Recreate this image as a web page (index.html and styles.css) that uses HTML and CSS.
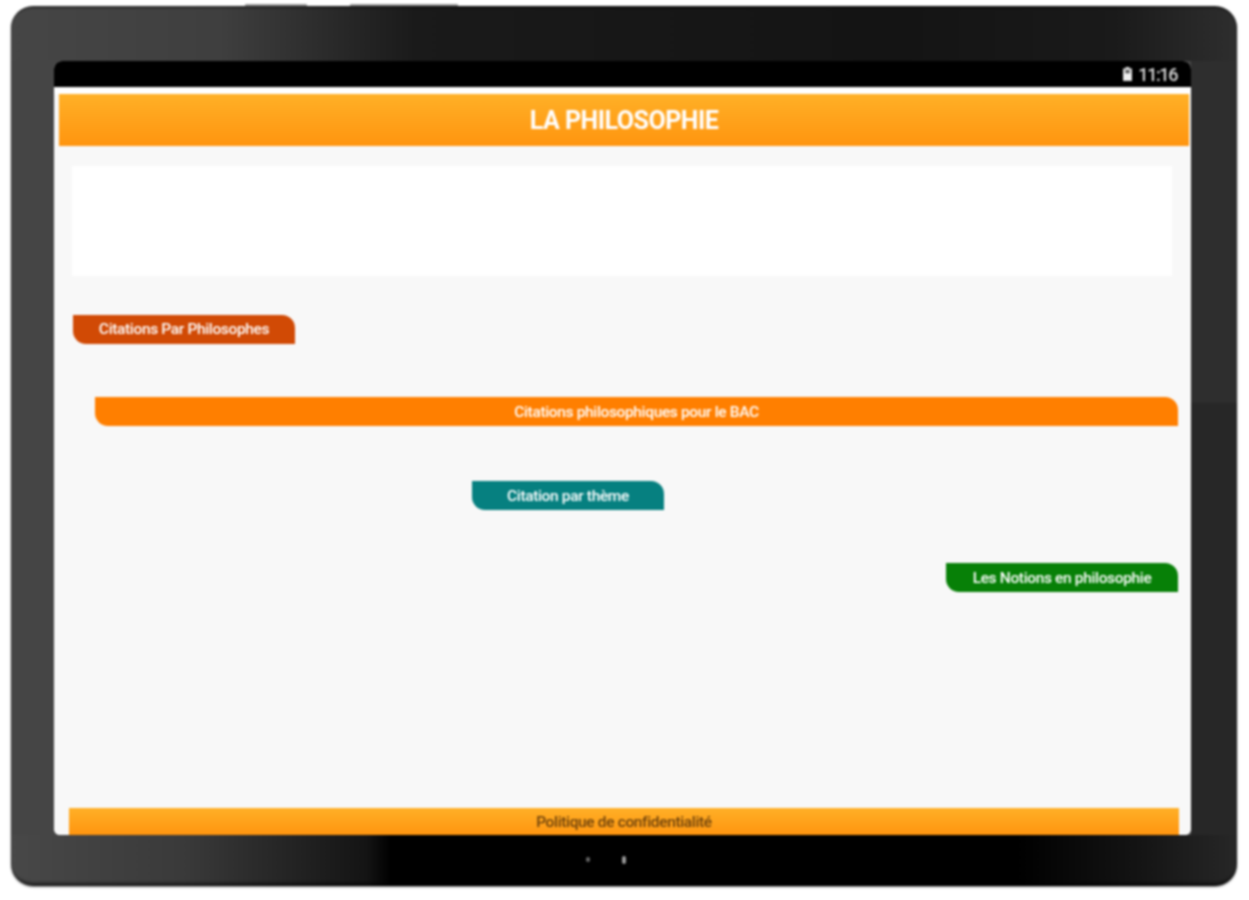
FILE: index.html
```html
<!DOCTYPE html>
<html lang="fr">
<head>
<meta charset="utf-8">
<title>La Philosophie</title>
<link rel="stylesheet" href="styles.css">
</head>
<body>
<div class="device">
  <span class="hw-key hw-key-a"></span>
  <span class="hw-key hw-key-b"></span>
  <div class="screen">
    <div class="status">
      <svg class="battery" width="9" height="14" viewBox="0 0 9 14" aria-hidden="true"><path d="M2.500 0h4v1.500H9V14H0V1.500h2.500z" fill="#dcdcdc"/><path d="M2.500 3h4v3.500h-4z" fill="#555"/><path d="M1 6.500h7V13H1z" fill="#efefef"/></svg>
      <span class="clock">11:16</span>
    </div>
    <div class="app">
      <header class="appbar"><h1>LA PHILOSOPHIE</h1></header>
      <div class="ad"></div>
      <a class="pill pill-red">Citations Par Philosophes</a>
      <a class="pill pill-orange">Citations philosophiques pour le BAC</a>
      <a class="pill pill-teal">Citation par thème</a>
      <a class="pill pill-green">Les Notions en philosophie</a>
      <footer class="policy">Politique de confidentialité</footer>
    </div>
  </div>
  <div class="nav">
    <span class="nav-dot"></span>
    <span class="nav-dot nav-dot-big"></span>
  </div>
</div>
</body>
</html>
```
FILE: styles.css
```css
* { box-sizing: border-box; }
html, body { margin: 0; height: 100%; background: #fff; }
body { padding: 6px 12px 14px 11px; font-family: Roboto, "Liberation Sans", sans-serif; }

.device {
  position: relative;
  height: 880px;
  padding: 55px 46px 0 43px;
  display: flex;
  flex-direction: column;
  border-radius: 22px;
  filter: blur(.8px);
  box-shadow: 0 1px 2px rgba(0,0,0,.5), inset 0 -6px 3px -3px rgba(0,0,0,.55), inset 0 3px 2px -1px rgba(0,0,0,.35);
  background:
    linear-gradient(90deg, #464646 0, #3f3f3f 17%, #1a1a1a 33%, #141414 72%, #1a1a1a 90%, #2e2e2e 100%) top/100% 55px no-repeat,
    linear-gradient(90deg, #484848 0, #3a3a3a 14%, #141414 29%, #000 31%, #000 82%, #141414 92%, #272727 100%) bottom/100% 51px no-repeat,
    linear-gradient(180deg, #2e2e2e 0, #2e2e2e 45%, #272727 45.200%, #272727 100%) right/46px 100% no-repeat,
    #454545;
}
.hw-key { position: absolute; top: -2px; height: 2px; background: #999; border-radius: 1px 1px 0 0; }
.hw-key-a { left: 234px; width: 62px; }
.hw-key-b { left: 339px; width: 108px; }

.screen {
  height: 774px;
  display: flex;
  flex-direction: column;
  border-radius: 8px 8px 6px 6px;
  overflow: hidden;
  background: #f8f8f8;
}
.status {
  height: 26px;
  flex: none;
  background: #000;
  display: flex;
  align-items: center;
  justify-content: flex-end;
  gap: 6px;
  padding-right: 14px;
}
.clock { color: #d8d8d8; font-size: 18px; font-weight: 500; letter-spacing: -1.400px; }

.app {
  flex: 1;
  display: flex;
  flex-direction: column;
  background: #f8f8f8;
  border-top: 7px solid #fff;
}
.appbar {
  flex: none;
  height: 52px;
  margin: 0 2px 0 5px;
  background: linear-gradient(180deg, #ffb027 0, #ff950f 100%);
  display: flex;
  align-items: center;
  justify-content: center;
}
.appbar h1 {
  margin: 0;
  color: #fff;
  font-size: 25px;
  font-weight: 700;
  letter-spacing: -.5px;
}
.ad { flex: none; height: 110px; margin: 20px 19px 0 18px; background: #fff; }

.pill {
  flex: none;
  height: 29px;
  display: flex;
  align-items: center;
  justify-content: center;
  color: #fff;
  font-size: 15.500px;
  font-weight: 500;
  letter-spacing: -.35px;
  border-radius: 0 13px 0 13px;
}
.pill-red { width: 222px; margin: 39px 0 0 19px; padding-bottom: 2px; background: #d14a05; }
.pill-orange { width: 1083px; margin: 53px 0 0 41px; background: #ff7f00; }
.pill-teal { width: 192px; margin: 55px 0 0 418px; background: #068080; }
.pill-green { width: 232px; margin: 53px 0 0 892px; background: #078007; }

.policy {
  flex: none;
  height: 27px;
  margin: auto 12px 0 15px;
  background: linear-gradient(180deg, #ffb027 0, #ff950f 100%);
  color: #6e420c;
  font-size: 15.500px;
  font-weight: 500;
  letter-spacing: -.35px;
  display: flex;
  align-items: center;
  justify-content: center;
}

.nav { flex: 1; display: flex; justify-content: center; align-items: center; gap: 32px; padding: 0 33px 2px 0; }
.nav-dot { width: 4px; height: 5px; border-radius: 2px; background: #666; }
.nav-dot-big { height: 8px; background: #999; }
```
